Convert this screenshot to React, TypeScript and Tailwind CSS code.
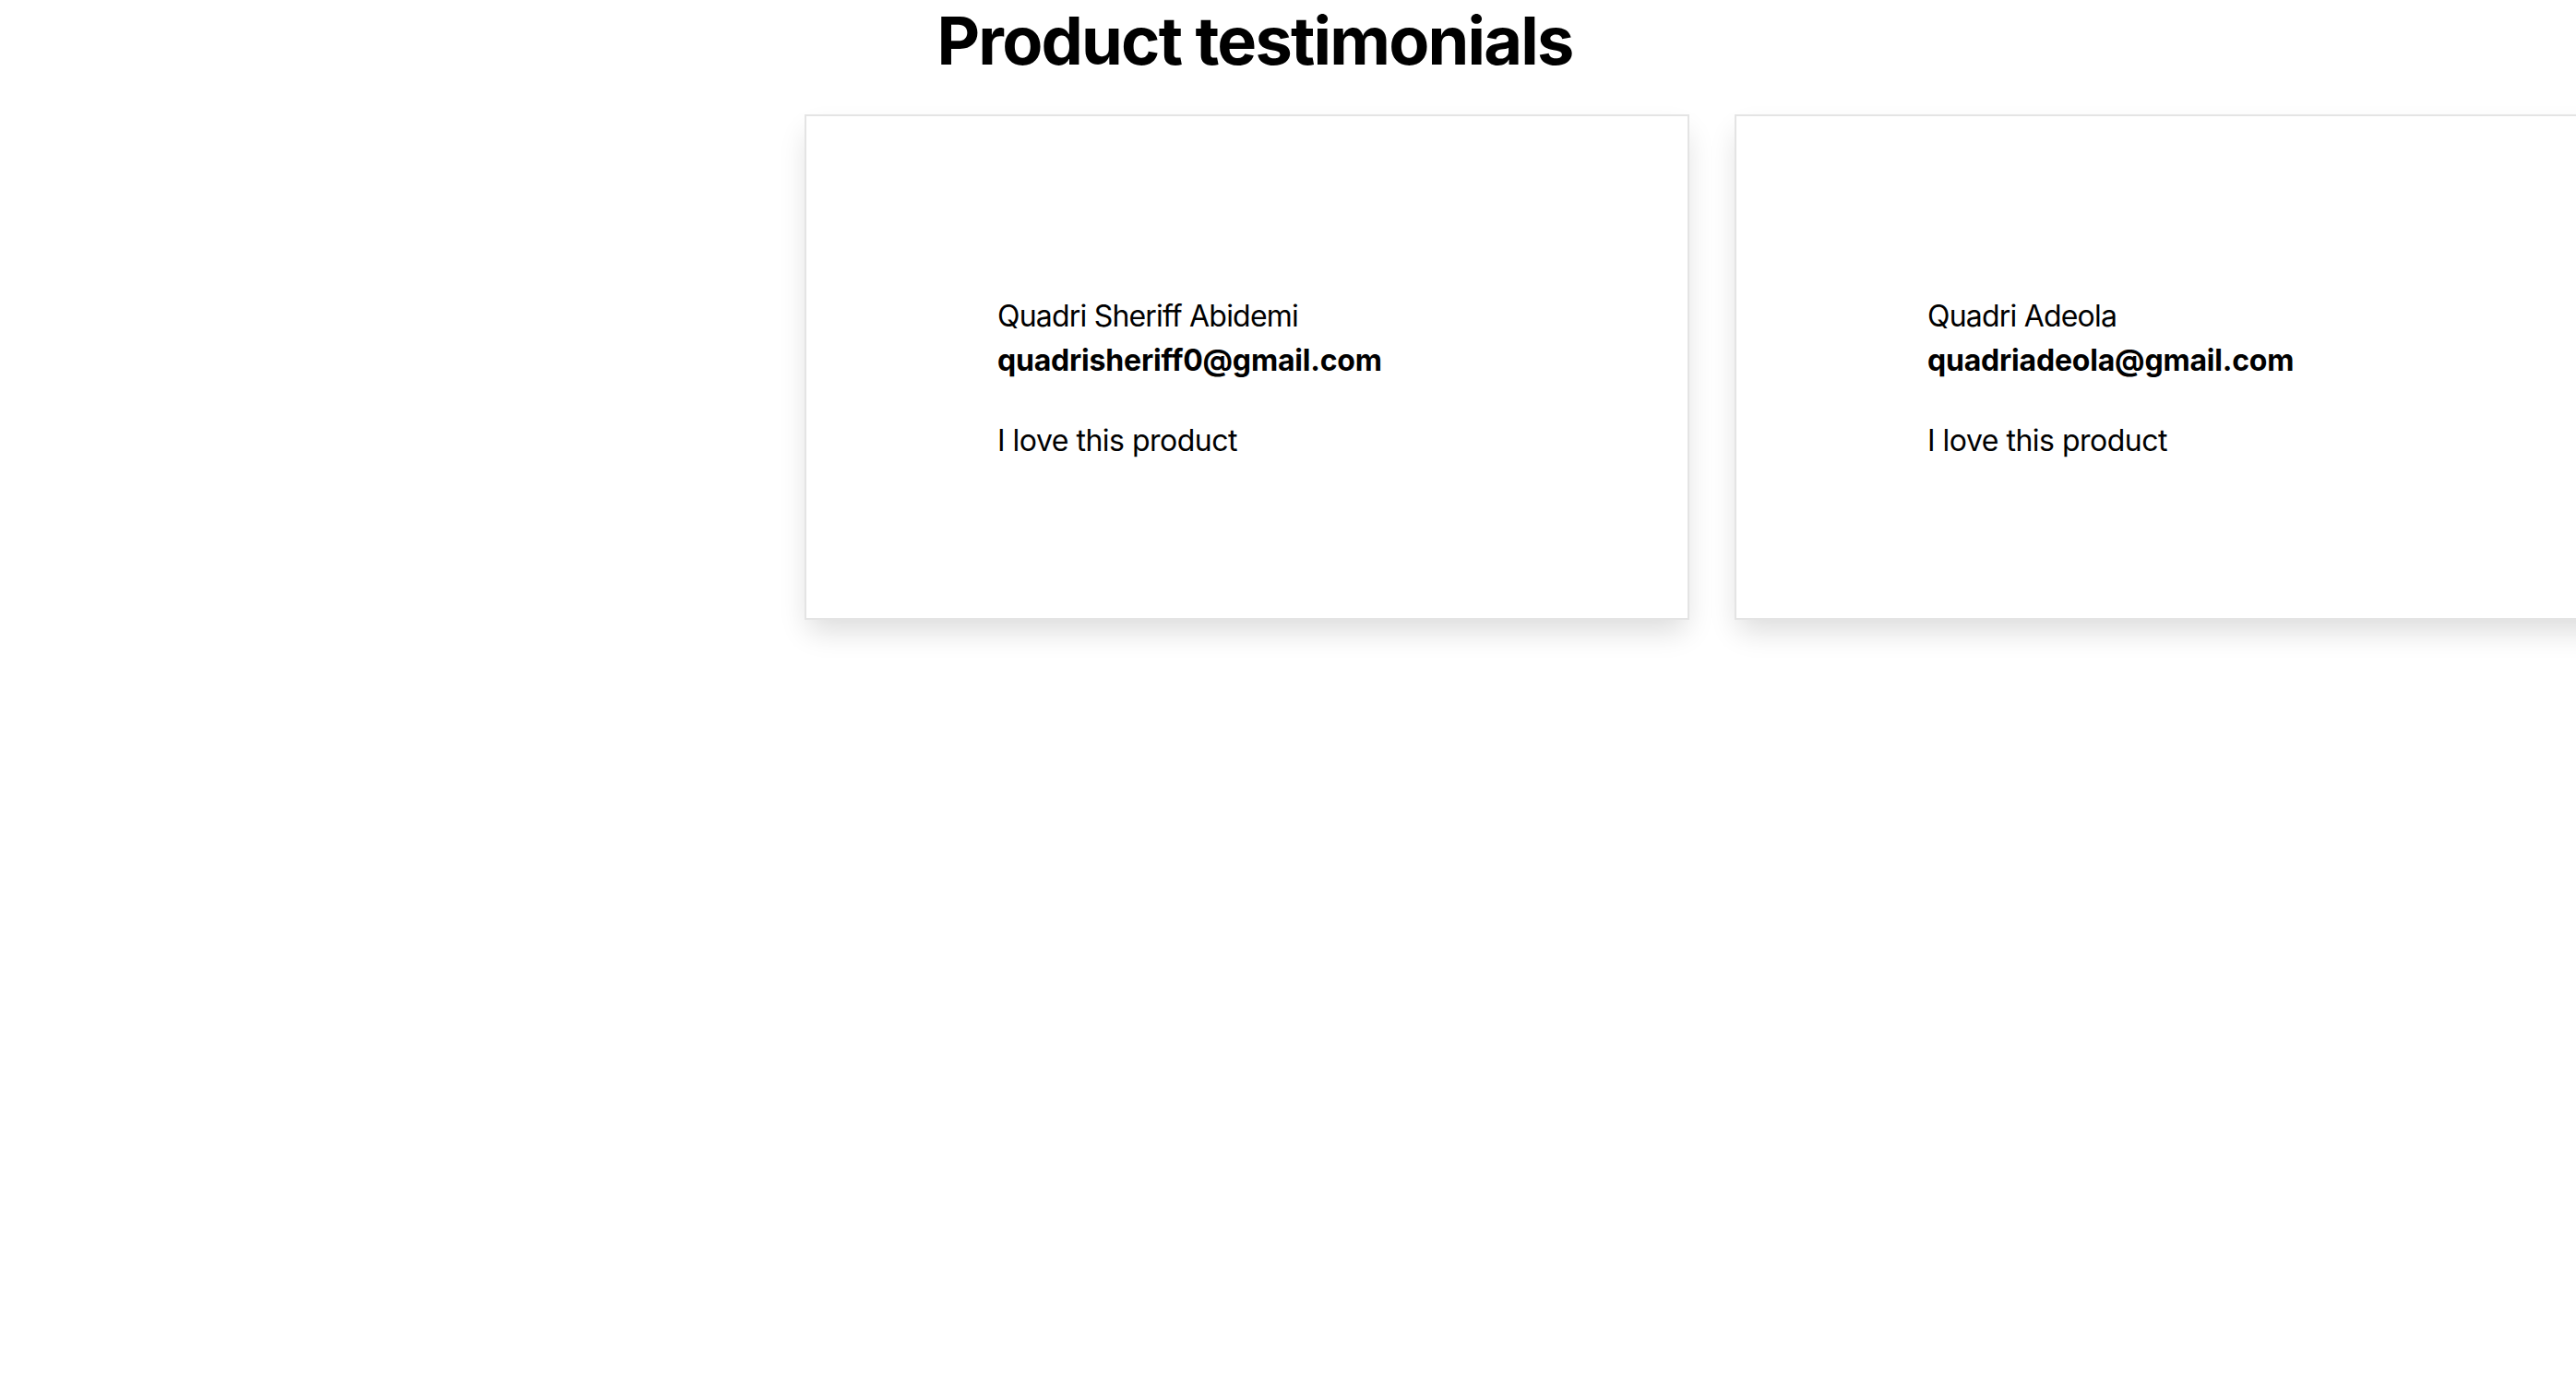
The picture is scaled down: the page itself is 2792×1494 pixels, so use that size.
const TESTIMONIALS = [
  { name: 'Quadri Sheriff Abidemi', email: 'quadrisheriff0@gmail.com', text: 'I love this product' },
  { name: 'Quadri Adeola', email: 'quadriadeola@gmail.com', text: 'I love this product' },
]

export default function App() {
  return (
    <div className="min-h-screen w-full overflow-hidden bg-white text-black" style={{ fontFamily: 'Inter, "Noto Sans", sans-serif' }}>
      <div className="pr-[72px]">
        <h1 className="text-center text-[72px] leading-[88px] font-bold tracking-[-1.8px]">Product testimonials</h1>
      </div>
      <div className="mt-[36px] flex gap-[49px] pl-[872px] pb-20">
        {TESTIMONIALS.map(t => (
          <div key={t.email} className="h-[548px] w-[959px] shrink-0 border-2 border-[#e4e4e4] bg-white pl-[207px] pt-[193px] shadow-[0_16px_30px_-4px_rgba(0,0,0,0.14)]">
            <p className="text-[32px] leading-[48px] font-normal tracking-[-0.8px]">{t.name}</p>
            <p className="text-[32px] leading-[48px] font-bold tracking-[-0.2px]">{t.email}</p>
            <p className="mt-[39px] text-[32px] leading-[48px] tracking-[-0.5px]">{t.text}</p>
          </div>
        ))}
      </div>
    </div>
  )
}
